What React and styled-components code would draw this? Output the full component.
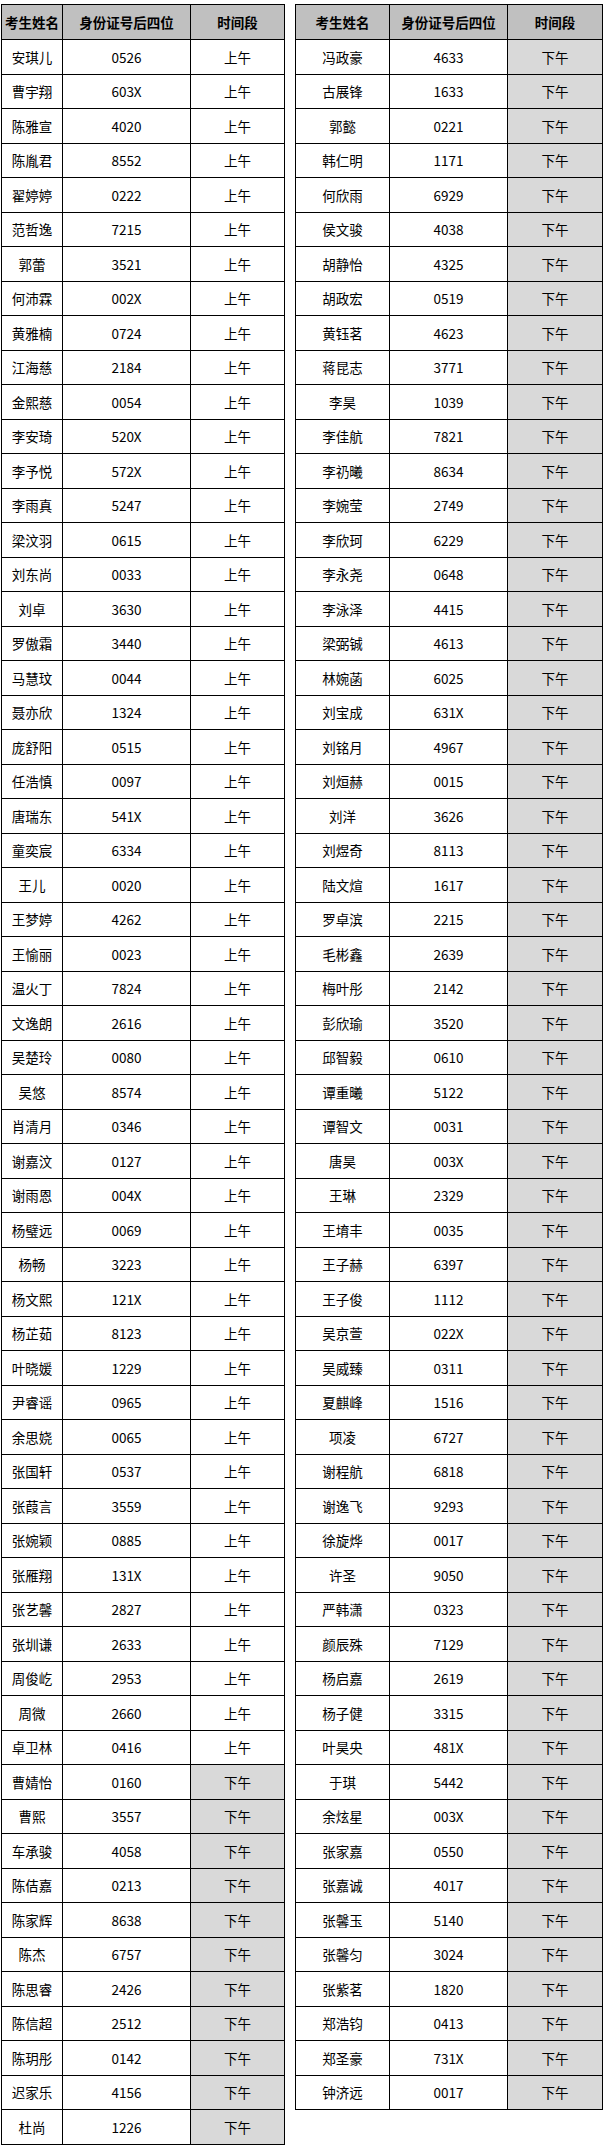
import React from 'react';
import styled, { createGlobalStyle } from 'styled-components';

const morning = [
  ['安琪儿', '0526'], ['曹宇翔', '603X'], ['陈雅宣', '4020'], ['陈胤君', '8552'],
  ['翟婷婷', '0222'], ['范哲逸', '7215'], ['郭蕾', '3521'], ['何沛霖', '002X'],
  ['黄雅楠', '0724'], ['江海慈', '2184'], ['金熙慈', '0054'], ['李安琦', '520X'],
  ['李予悦', '572X'], ['李雨真', '5247'], ['梁汶羽', '0615'], ['刘东尚', '0033'],
  ['刘卓', '3630'], ['罗傲霜', '3440'], ['马慧玟', '0044'], ['聂亦欣', '1324'],
  ['庞舒阳', '0515'], ['任浩慎', '0097'], ['唐瑞东', '541X'], ['童奕宸', '6334'],
  ['王儿', '0020'], ['王梦婷', '4262'], ['王愉丽', '0023'], ['温火丁', '7824'],
  ['文逸朗', '2616'], ['吴楚玲', '0080'], ['吴悠', '8574'], ['肖清月', '0346'],
  ['谢嘉汶', '0127'], ['谢雨恩', '004X'], ['杨璧远', '0069'], ['杨畅', '3223'],
  ['杨文熙', '121X'], ['杨芷茹', '8123'], ['叶晓媛', '1229'], ['尹睿谣', '0965'],
  ['余思娆', '0065'], ['张国轩', '0537'], ['张葭言', '3559'], ['张婉颖', '0885'],
  ['张雁翔', '131X'], ['张艺馨', '2827'], ['张圳谦', '2633'], ['周俊屹', '2953'],
  ['周微', '2660'], ['卓卫林', '0416'],
];

const leftAfternoon = [
  ['曹婧怡', '0160'], ['曹熙', '3557'], ['车承骏', '4058'], ['陈佶嘉', '0213'],
  ['陈家辉', '8638'], ['陈杰', '6757'], ['陈思睿', '2426'], ['陈信超', '2512'],
  ['陈玥彤', '0142'], ['迟家乐', '4156'], ['杜尚', '1226'],
];

const rightAfternoon = [
  ['冯政豪', '4633'], ['古展锋', '1633'], ['郭懿', '0221'], ['韩仁明', '1171'],
  ['何欣雨', '6929'], ['侯文骏', '4038'], ['胡静怡', '4325'], ['胡政宏', '0519'],
  ['黄钰茗', '4623'], ['蒋昆志', '3771'], ['李昊', '1039'], ['李佳航', '7821'],
  ['李礽曦', '8634'], ['李婉莹', '2749'], ['李欣珂', '6229'], ['李永尧', '0648'],
  ['李泳泽', '4415'], ['梁弼铖', '4613'], ['林婉菡', '6025'], ['刘宝成', '631X'],
  ['刘铭月', '4967'], ['刘烜赫', '0015'], ['刘洋', '3626'], ['刘煜奇', '8113'],
  ['陆文煊', '1617'], ['罗卓滨', '2215'], ['毛彬鑫', '2639'], ['梅叶彤', '2142'],
  ['彭欣瑜', '3520'], ['邱智毅', '0610'], ['谭重曦', '5122'], ['谭智文', '0031'],
  ['唐昊', '003X'], ['王琳', '2329'], ['王堉丰', '0035'], ['王子赫', '6397'],
  ['王子俊', '1112'], ['吴京萱', '022X'], ['吴威臻', '0311'], ['夏麒峰', '1516'],
  ['项凌', '6727'], ['谢程航', '6818'], ['谢逸飞', '9293'], ['徐旋烨', '0017'],
  ['许圣', '9050'], ['严韩潇', '0323'], ['颜辰殊', '7129'], ['杨启嘉', '2619'],
  ['杨子健', '3315'], ['叶昊央', '481X'], ['于琪', '5442'], ['余炫星', '003X'],
  ['张家嘉', '0550'], ['张嘉诚', '4017'], ['张馨玉', '5140'], ['张馨匀', '3024'],
  ['张紫茗', '1820'], ['郑浩钧', '0413'], ['郑圣豪', '731X'], ['钟济远', '0017'],
];

const leftRows = [
  ...morning.map(([name, id]) => ({ name, id, slot: '上午' })),
  ...leftAfternoon.map(([name, id]) => ({ name, id, slot: '下午' })),
];
const rightRows = rightAfternoon.map(([name, id]) => ({ name, id, slot: '下午' }));

function RosterTable({ rows, widths }) {
  return (
    <Table $width={widths.reduce((a, b) => a + b, 1)}>
      <colgroup>
        {widths.map((w, i) => <col key={i} style={{ width: w }} />)}
      </colgroup>
      <thead>
        <tr>
          <HeadCell>考生姓名</HeadCell>
          <HeadCell>身份证号后四位</HeadCell>
          <HeadCell>时间段</HeadCell>
        </tr>
      </thead>
      <tbody>
        {rows.map((r) => (
          <tr key={r.name}>
            <Cell>{r.name}</Cell>
            <Cell>{r.id}</Cell>
            <Cell $shade={r.slot === '下午'}>{r.slot}</Cell>
          </tr>
        ))}
      </tbody>
    </Table>
  );
}

function App() {
  return (
    <>
      <GlobalStyle />
      <Page>
        <RosterTable rows={leftRows} widths={[61, 128, 94]} />
        <RosterTable rows={rightRows} widths={[94, 118, 95]} />
      </Page>
    </>
  );
}

//////// style ////////

const GlobalStyle = createGlobalStyle`
  body {
    margin: 0;
    background: #fff;
    font-family: "Noto Sans CJK SC", "Noto Sans", sans-serif;
    color: #000;
  }
`;

const Page = styled.div`
  display: flex;
  align-items: flex-start;
  gap: 10px;
  padding: 4px 0 0 1px;
`;

const Table = styled.table`
  width: ${(p) => p.$width}px;
  table-layout: fixed;
  border-collapse: separate;
  border-spacing: 0;
  border-top: 1px solid #000;
  border-left: 1px solid #000;
`;

const HeadCell = styled.th`
  box-sizing: border-box;
  height: 35px;
  padding: 0;
  border-right: 1px solid #000;
  border-bottom: 1px solid #000;
  background: #c0c0c0;
  font-size: 13.5px;
  font-weight: 700;
  text-align: center;
  white-space: nowrap;
`;

const Cell = styled.td`
  box-sizing: border-box;
  height: 34.5px;
  padding: 0;
  border-right: 1px solid #000;
  border-bottom: 1px solid #000;
  background: ${(p) => (p.$shade ? '#d9d9d9' : '#fff')};
  font-size: 13.5px;
  text-align: center;
  white-space: nowrap;
`;

export default App;
